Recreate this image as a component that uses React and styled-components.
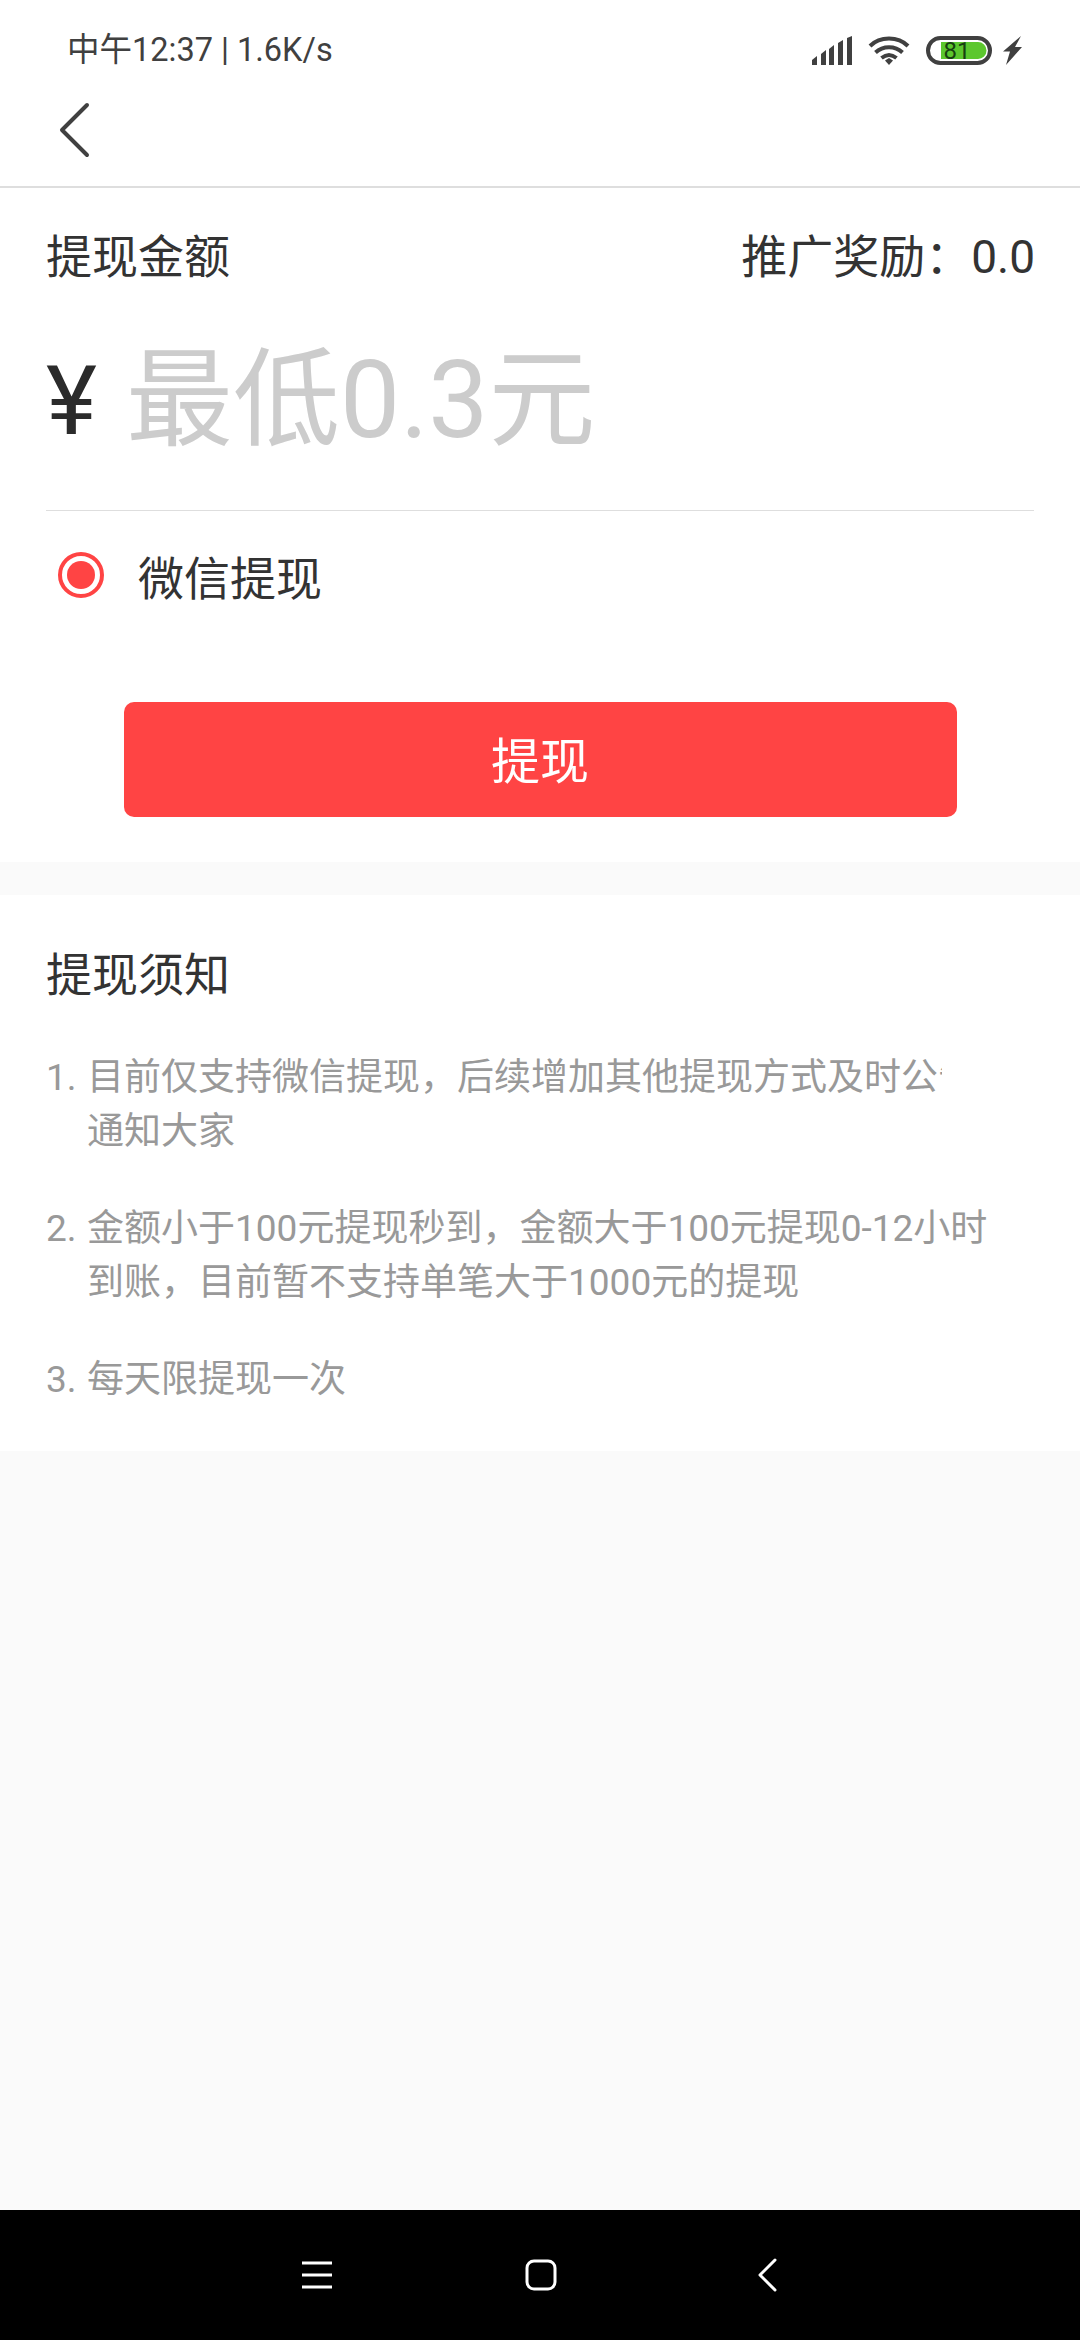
import React from "react";
import styled, { createGlobalStyle } from "styled-components";

const GlobalStyle = createGlobalStyle`
  html, body {
    margin: 0;
    padding: 0;
    background: #fafafa;
    font-family: Roboto, "Noto Sans CJK SC", sans-serif;
  }
`;

const Page = styled.div`
  width: 1080px;
  height: 2340px;
  display: flex;
  flex-direction: column;
  overflow: hidden;
`;

const TopArea = styled.div`
  background: #fff;
  height: 188px;
  box-sizing: border-box;
  border-bottom: 2px solid #dedede;
  display: flex;
  flex-direction: column;
`;

const StatusBar = styled.div`
  height: 100px;
  box-sizing: border-box;
  padding: 0 58px 0 67px;
  display: flex;
  align-items: center;
  justify-content: space-between;
  color: #404040;
`;

const StatusText = styled.div`
  font-size: 32.5px;
  line-height: 40px;
`;

const StatusIcons = styled.div`
  display: flex;
  align-items: center;
  gap: 16px;
`;

const BatteryIcon = styled.svg`
  margin-right: -5px;
`;

const BackRow = styled.div`
  padding: 2px 0 0 58px;
  display: flex;
`;

const Card = styled.section`
  background: #fff;
  box-sizing: border-box;
  padding: 0 46px;
`;

const AmountCard = styled(Card)`
  height: 674px;
  margin-bottom: 33px;
`;

const AmountHead = styled.div`
  height: 100px;
  padding: 30px 0 0;
  margin-right: -1px;
  box-sizing: border-box;
  display: flex;
  align-items: center;
  justify-content: space-between;
  color: #333;
  font-size: 46px;
`;

const AmountRow = styled.div`
  height: 223px;
  box-sizing: border-box;
  border-bottom: 1px solid #dedede;
  display: flex;
  align-items: flex-start;
  padding-top: 48px;
`;

const Yen = styled.span`
  font-size: 97px;
  line-height: 130px;
  width: 80px;
  color: #2b2b2b;
`;

const Placeholder = styled.span`
  font-size: 107px;
  line-height: 130px;
  color: #cccccc;
`;

const PayRow = styled.div`
  height: 127px;
  display: flex;
  align-items: center;
  gap: 34px;
  padding-left: 12px;
  color: #333;
  font-size: 46px;
`;

const Radio = styled.span`
  width: 46px;
  height: 46px;
  box-sizing: border-box;
  border: 4px solid #ff4444;
  border-radius: 50%;
  display: flex;
  align-items: center;
  justify-content: center;
  &::after {
    content: "";
    width: 28px;
    height: 28px;
    border-radius: 50%;
    background: #ff4444;
  }
`;

const SubmitButton = styled.button`
  display: block;
  width: 833px;
  height: 115px;
  margin: 64px auto 0;
  padding: 0 0 4px;
  border: 0;
  border-radius: 10px;
  background: #ff4444;
  color: #fff;
  font-family: inherit;
  font-size: 49px;
`;

const NoticeCard = styled(Card)`
  height: 556px;
  padding-top: 50px;
`;

const NoticeTitle = styled.h2`
  margin: 0 0 46px;
  font-size: 46px;
  line-height: 60px;
  font-weight: 400;
  color: #333;
`;

const NoticeList = styled.ol`
  margin: 0;
  padding: 0;
  list-style: none;
  display: flex;
  flex-direction: column;
  gap: 43px;
`;

const NoticeItem = styled.li`
  display: flex;
  color: #999;
  font-size: 37px;
  line-height: 54px;
`;

const NoticeNum = styled.span`
  width: 41px;
  flex-shrink: 0;
`;

const NoticeLines = styled.div`
  flex: 1;
`;

const NoticeLine = styled.div`
  white-space: nowrap;
  ${(p) => p.$clip && "width: 855px; overflow: hidden;"}
`;

const Spacer = styled.div`
  flex: 1;
`;

const NavBar = styled.nav`
  height: 130px;
  background: #000;
  display: flex;
  align-items: center;
  padding-left: 302px;
  gap: 193px;
`;

const NavIcon = styled.svg`
  display: block;
  flex-shrink: 0;
`;

const notes = [
  { lines: ["目前仅支持微信提现，后续增加其他提现方式及时公告", "通知大家"], clipFirst: true },
  { lines: ["金额小于100元提现秒到，金额大于100元提现0-12小时", "到账，目前暂不支持单笔大于1000元的提现"] },
  { lines: ["每天限提现一次"] },
];

const App = () => {
  return (
    <Page>
      <GlobalStyle />
      <TopArea>
        <StatusBar>
          <StatusText>中午12:37 | 1.6K/s</StatusText>
          <StatusIcons>
            <svg width="40" height="29" viewBox="0 0 40 29" fill="#404040">
              <path d="M0 24l5-4v9H0zM9 18l5-4v15H9zM17 13l5-4v20h-5zM26 7l5-3v25h-5zM35 2l5-2v29h-5z" />
            </svg>
            <svg width="42" height="29" viewBox="0 0 42 29" fill="none" stroke="#404040" strokeWidth="4">
              <path d="M2 10C12 0 30 0 40 10" />
              <path d="M7.5 16.5C15 9.5 27 9.5 34.5 16.5" />
              <path d="M13.5 22c5-4 10-4 15 0" />
              <path d="M17 24.5l4-2.5 4 2.5-4 4.5z" fill="#404040" stroke="none" />
            </svg>
            <BatteryIcon width="66" height="29" viewBox="0 0 66 29">
              <rect x="2" y="2" width="62" height="25" rx="12.5" fill="#fff" stroke="#404040" strokeWidth="4" />
              <path d="M15 6h37a8.500 8.500 0 0 1 0 17H15z" fill="#5cc72e" />
              <text x="31" y="23" fontSize="24" fontFamily="Roboto, sans-serif" textAnchor="middle" fill="#174010">81</text>
            </BatteryIcon>
            <svg width="19" height="29" viewBox="0 0 19 29" fill="#404040">
              <path d="M18 0L0 15.500h7L3 29 19 11h-7z" />
            </svg>
          </StatusIcons>
        </StatusBar>
        <BackRow>
          <svg width="34" height="56" viewBox="0 0 34 56" fill="none" stroke="#404040" strokeWidth="4" strokeLinecap="round" strokeLinejoin="round">
            <path d="M29 3L4 28l25 25" />
          </svg>
        </BackRow>
      </TopArea>

      <AmountCard>
        <AmountHead>
          <span>提现金额</span>
          <span>推广奖励：0.0</span>
        </AmountHead>
        <AmountRow>
          <Yen>¥</Yen>
          <Placeholder>最低0.3元</Placeholder>
        </AmountRow>
        <PayRow>
          <Radio />
          <span>微信提现</span>
        </PayRow>
        <SubmitButton>提现</SubmitButton>
      </AmountCard>

      <NoticeCard>
        <NoticeTitle>提现须知</NoticeTitle>
        <NoticeList>
          {notes.map((note, i) => (
            <NoticeItem key={i}>
              <NoticeNum>{i + 1}.</NoticeNum>
              <NoticeLines>
                {note.lines.map((line, j) => (
                  <NoticeLine key={line} $clip={note.clipFirst && j === 0}>
                    {line}
                  </NoticeLine>
                ))}
              </NoticeLines>
            </NoticeItem>
          ))}
        </NoticeList>
      </NoticeCard>

      <Spacer />

      <NavBar>
        <NavIcon width="30" height="28" viewBox="0 0 30 28" stroke="#fff" strokeWidth="3" fill="none">
          <path d="M0 2h30M0 14h30M0 26h30" />
        </NavIcon>
        <NavIcon width="32" height="32" viewBox="0 0 32 32" stroke="#fff" strokeWidth="3" fill="none">
          <rect x="2" y="2" width="28" height="28" rx="7" />
        </NavIcon>
        <NavIcon width="27" height="34" viewBox="0 0 27 34" stroke="#fff" strokeWidth="3" fill="none" strokeLinecap="round" strokeLinejoin="round">
          <path d="M25 2L10 17l15 15" />
        </NavIcon>
      </NavBar>
    </Page>
  );
};

export default App;
